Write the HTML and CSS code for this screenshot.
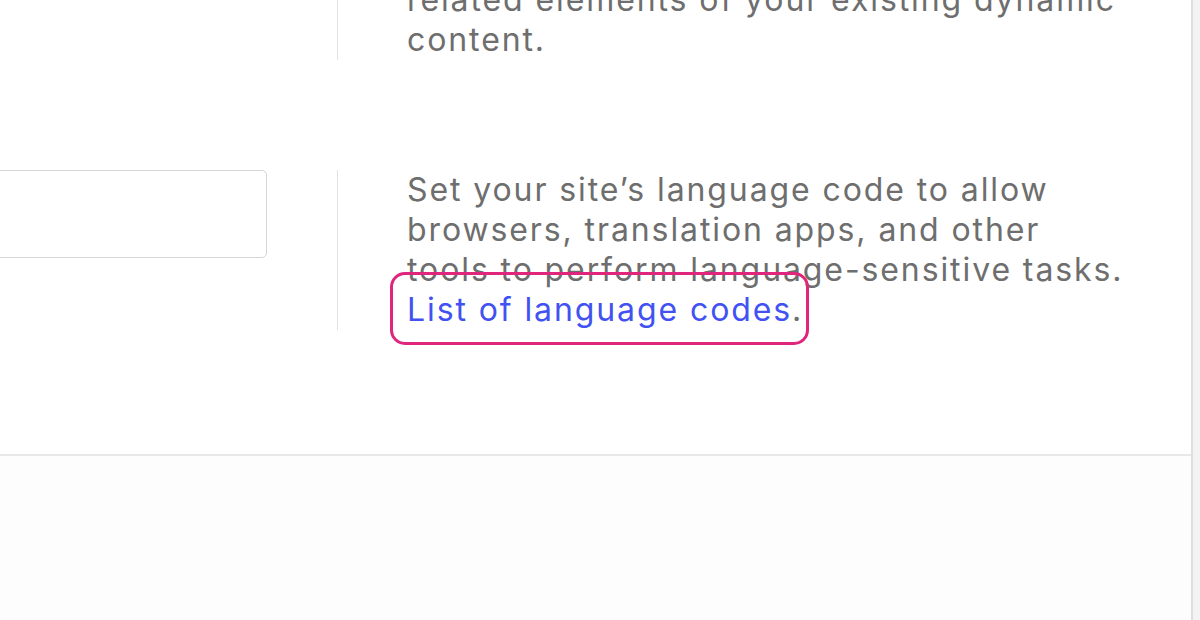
FILE: index.html
```html
<!DOCTYPE html>
<html lang="en">
<head>
    <meta charset="UTF-8">
    <meta name="viewport" content="width=device-width, initial-scale=1.0">
    <title>Site settings</title>
    <link rel="stylesheet" href="styles.css">
</head>
<body>
    <div class="page">
        <!-- Einstellungen (gescrollt) -->
        <section class="settings">
            <div class="setting-row">
                <div class="setting-field"></div>
                <div class="setting-help">
                    <p>Apply these attributes to the<br>related elements of your existing dynamic content.</p>
                </div>
            </div>

            <div class="setting-row">
                <div class="setting-field">
                    <input class="text-input" type="text" aria-label="Language code">
                </div>
                <div class="setting-help">
                    <p>Set your site&rsquo;s language code to allow browsers, translation apps, and other tools to perform language-sensitive tasks. <span class="highlight"><a href="#" class="link">List of language codes</a>.</span></p>
                </div>
            </div>
        </section>
    </div>
</body>
</html>
```

FILE: styles.css
```css
/* Allgemeines Styling */
body {
    margin: 0;
    height: 100vh;
    overflow: hidden;
    background-color: #f3f3f3;
    font-family: Inter, "Noto Sans", sans-serif;
}

.page {
    width: 1191px;
    height: 100%;
    background-color: #fdfdfd;
    border-right: 2px solid #dedede;
    overflow: hidden;
}

/* Einstellungen */
.settings {
    margin-top: -60px;
    margin-left: -300px;
    padding-bottom: 124px;
    border-bottom: 2px solid #e8e8e8;
    background-color: #fff;
    display: flex;
    flex-direction: column;
    gap: 110px;
}

.setting-row {
    display: flex;
    align-items: flex-start;
    gap: 70px;
}

.setting-field {
    width: 567px;
    flex-shrink: 0;
}

.text-input {
    display: block;
    box-sizing: border-box;
    width: 100%;
    height: 88px;
    border: 1.5px solid #d6d6d6;
    border-radius: 5px;
    background-color: #fff;
}

.setting-help {
    width: 724px;
    flex-shrink: 0;
    border-left: 1.5px solid #e2e2e2;
    padding-left: 69px;
}
.setting-help p {
    margin: 0;
    font-size: 32px;
    line-height: 40px;
    letter-spacing: 1.9px;
    color: #6e6e6e;
}

.link {
    color: #4252f2;
    text-decoration: none;
}

/* Markierung um den Link */
.highlight {
    position: relative;
    display: inline-block;
}
.highlight::after {
    content: "";
    position: absolute;
    top: -18px;
    bottom: -15px;
    left: -17px;
    right: -6px;
    border: 3.5px solid #e0267c;
    border-radius: 15px;
}
```
